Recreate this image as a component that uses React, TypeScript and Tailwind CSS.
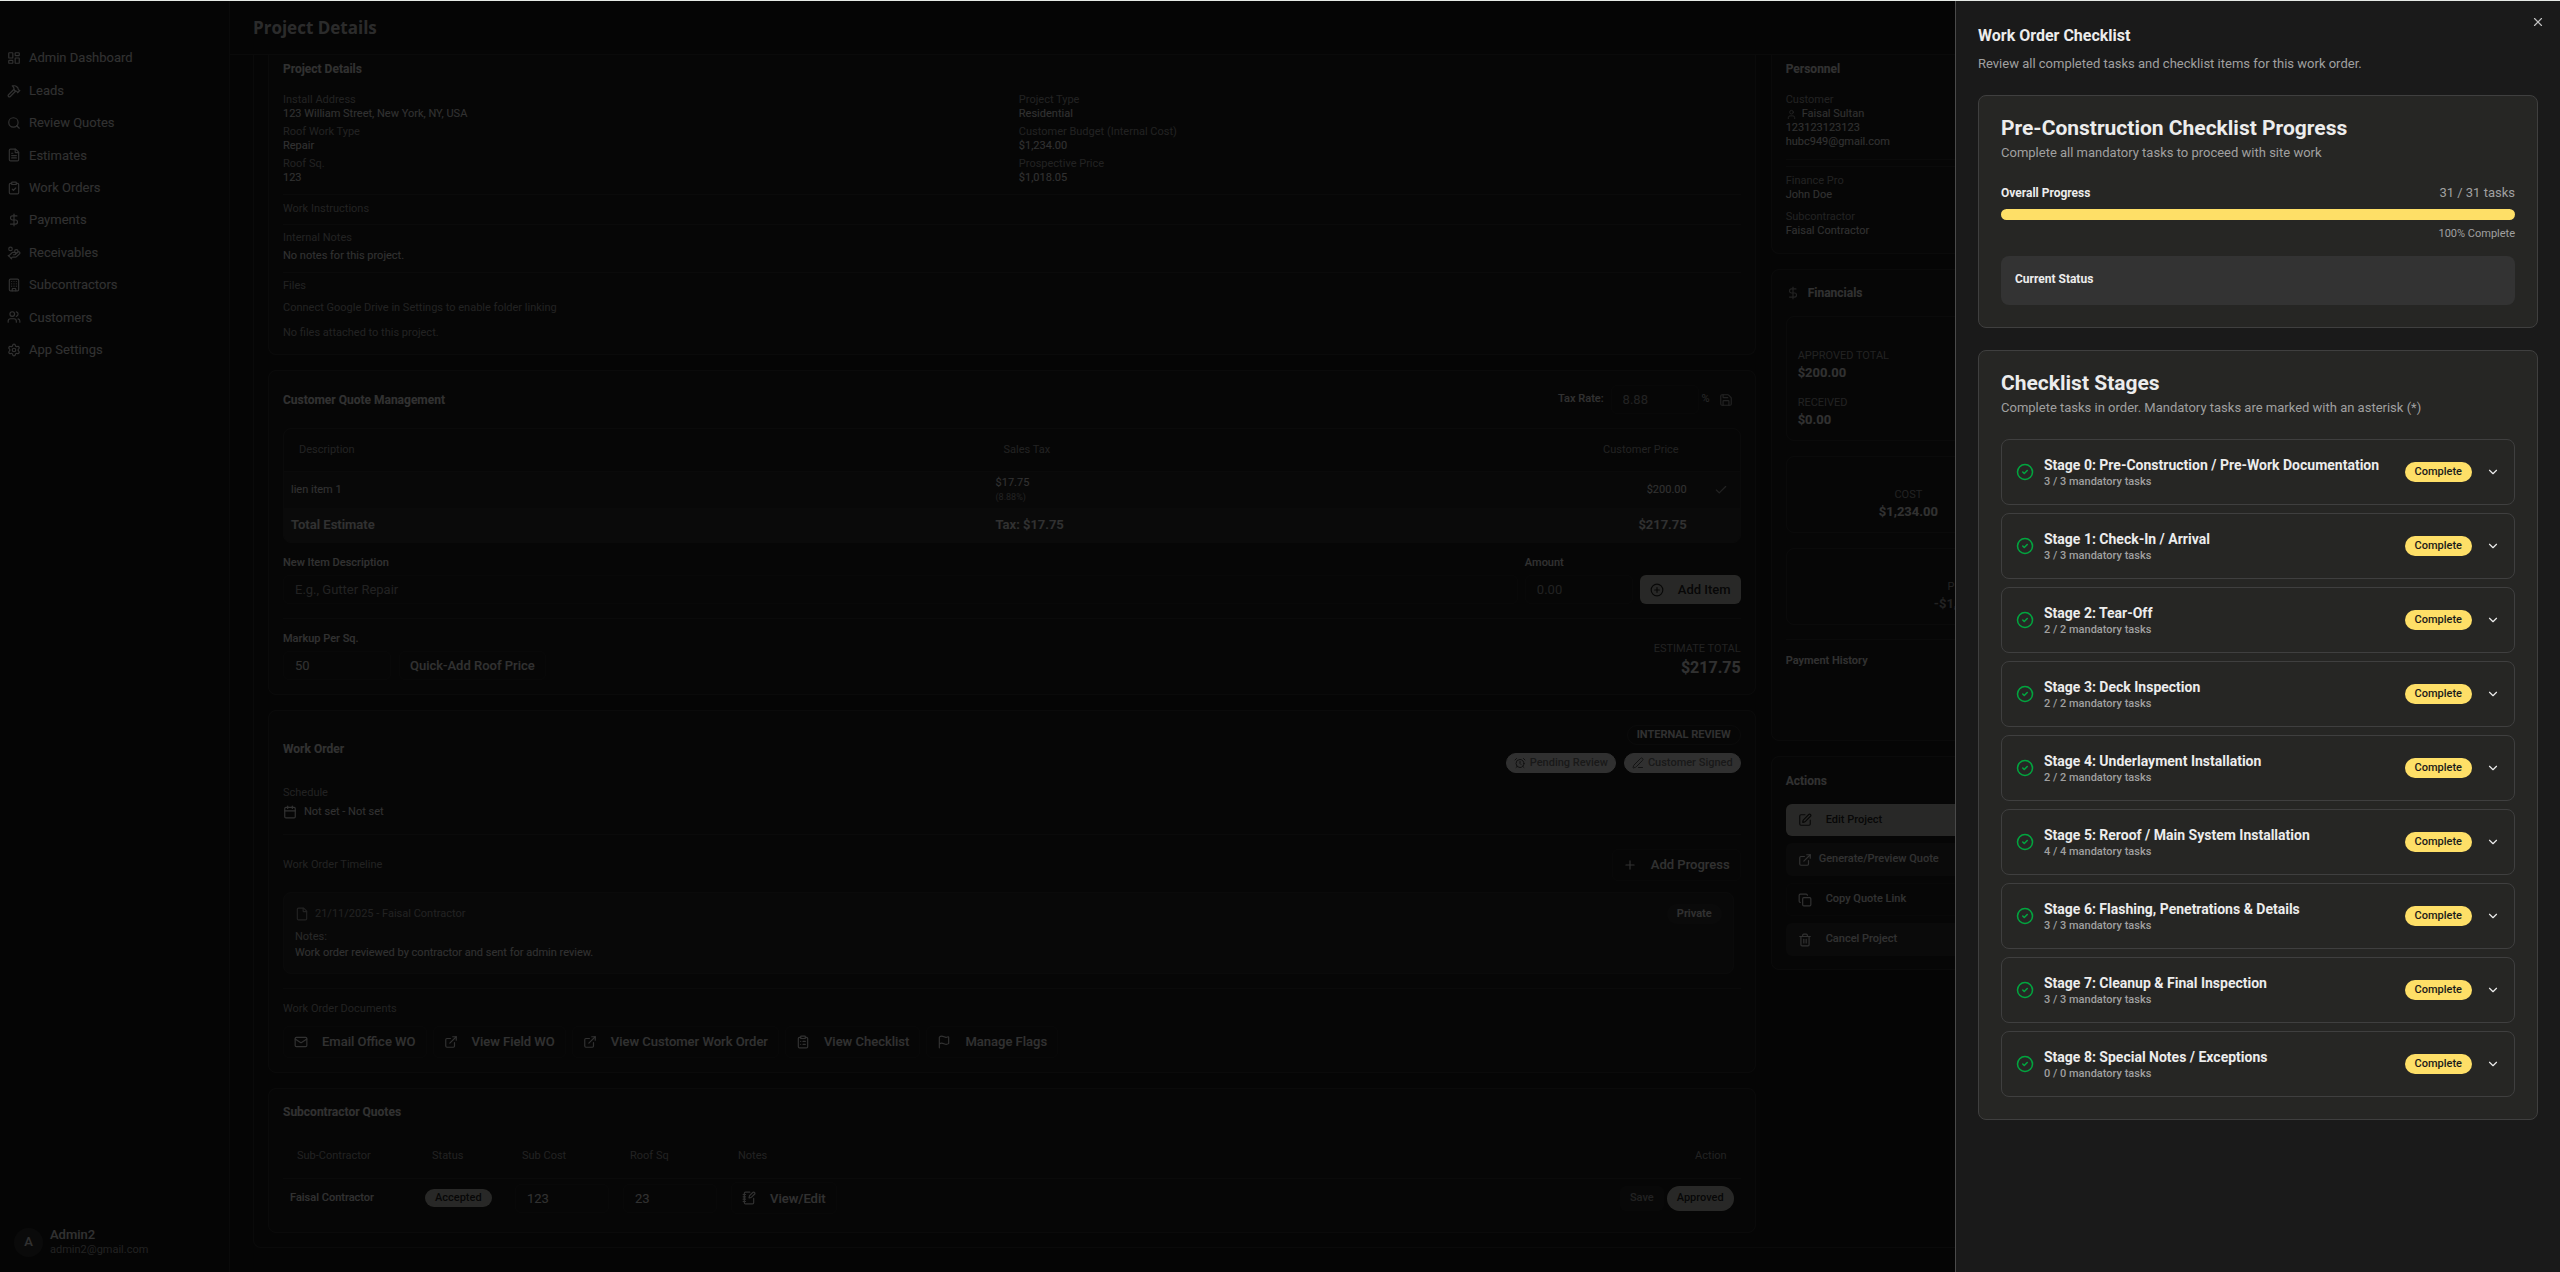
import { ReactNode } from "react";
import {
  AlarmClock,
  Building,
  Calendar,
  Check,
  ChevronDown,
  CircleCheck,
  CirclePlus,
  ClipboardCheck,
  ClipboardList,
  Copy,
  DollarSign,
  ExternalLink,
  File,
  FileText,
  Flag,
  Hammer,
  HandCoins,
  LayoutDashboard,
  LucideIcon,
  Mail,
  NotebookPen,
  PenLine,
  Plus,
  Save,
  Search,
  Settings,
  SquarePen,
  Trash2,
  User,
  Users,
  X,
} from "lucide-react";
import clsx from "clsx";

/* ================= DATA ================= */

const navItems: { label: string; icon: LucideIcon }[] = [
  { label: "Admin Dashboard", icon: LayoutDashboard },
  { label: "Leads", icon: Hammer },
  { label: "Review Quotes", icon: Search },
  { label: "Estimates", icon: FileText },
  { label: "Work Orders", icon: ClipboardCheck },
  { label: "Payments", icon: DollarSign },
  { label: "Receivables", icon: HandCoins },
  { label: "Subcontractors", icon: Building },
  { label: "Customers", icon: Users },
  { label: "App Settings", icon: Settings },
];

const projectFields = [
  { label: "Install Address", value: "123 William Street, New York, NY, USA" },
  { label: "Project Type", value: "Residential" },
  { label: "Roof Work Type", value: "Repair" },
  { label: "Customer Budget (Internal Cost)", value: "$1,234.00" },
  { label: "Roof Sq.", value: "123" },
  { label: "Prospective Price", value: "$1,018.05" },
];

const documents: { label: string; icon: LucideIcon }[] = [
  { label: "Email Office WO", icon: Mail },
  { label: "View Field WO", icon: ExternalLink },
  { label: "View Customer Work Order", icon: ExternalLink },
  { label: "View Checklist", icon: ClipboardList },
  { label: "Manage Flags", icon: Flag },
];

const stages = [
  { title: "Stage 0: Pre-Construction / Pre-Work Documentation", done: 3, total: 3 },
  { title: "Stage 1: Check-In / Arrival", done: 3, total: 3 },
  { title: "Stage 2: Tear-Off", done: 2, total: 2 },
  { title: "Stage 3: Deck Inspection", done: 2, total: 2 },
  { title: "Stage 4: Underlayment Installation", done: 2, total: 2 },
  { title: "Stage 5: Reroof / Main System Installation", done: 4, total: 4 },
  { title: "Stage 6: Flashing, Penetrations & Details", done: 3, total: 3 },
  { title: "Stage 7: Cleanup & Final Inspection", done: 3, total: 3 },
  { title: "Stage 8: Special Notes / Exceptions", done: 0, total: 0 },
];

/* ================= SHARED ================= */

function Card({ children, className }: { children: ReactNode; className?: string }) {
  return (
    <section
      className={clsx(
        "rounded-lg border border-[#363636] bg-[#1f1f1f] px-[14px]",
        className
      )}
    >
      {children}
    </section>
  );
}

function CardTitle({ children }: { children: ReactNode }) {
  return <h2 className="text-[12px] leading-[18px] font-bold">{children}</h2>;
}

function Label({ children }: { children: ReactNode }) {
  return <p className="text-[11px] leading-[14px] text-[#a8a8a8]">{children}</p>;
}

function Value({ children }: { children: ReactNode }) {
  return <p className="text-[11px] leading-[14px]">{children}</p>;
}

function OutlineButton({
  icon: Icon,
  children,
}: {
  icon?: LucideIcon;
  children: ReactNode;
}) {
  return (
    <button className="flex h-8 items-center gap-[14px] rounded-md border border-[#2c2c2c] px-[10px] text-[13px] font-medium">
      {Icon && <Icon className="size-[14px]" />}
      {children}
    </button>
  );
}

const inputClass =
  "h-[29px] rounded-md border border-[#2c2c2c] bg-transparent px-[11px] text-[13px] placeholder:text-[#a8a8a8]";

/* ================= SIDEBAR ================= */

function Sidebar() {
  return (
    <aside className="flex w-[230px] shrink-0 flex-col border-r border-[#363636] pt-[41px]">
      <nav className="grid h-[324px] auto-rows-fr">
        {navItems.map(({ label, icon: Icon }) => (
          <a key={label} href="#" className="flex items-center gap-2 px-[7px] text-[13px]">
            <Icon className="size-[14px]" />
            {label}
          </a>
        ))}
      </nav>

      <div className="mt-auto flex items-center gap-[7px] px-[14px] pb-[15px]">
        <div className="flex size-[29px] items-center justify-center rounded-full bg-[#333333] text-[13px] font-medium">
          A
        </div>
        <div>
          <p className="text-[13px] leading-4 font-medium">Admin2</p>
          <p className="text-[11px] leading-[14px] text-[#a8a8a8]">admin2@gmail.com</p>
        </div>
      </div>
    </aside>
  );
}

/* ================= LEFT COLUMN ================= */

function ProjectDetailsCard() {
  return (
    <Card className="rounded-t-none border-t-0 pt-[5px] pb-[14px]">
      <CardTitle>Project Details</CardTitle>
      <div className="mt-[15px] grid grid-cols-2 gap-x-[14px] gap-y-1">
        {projectFields.map((field) => (
          <div key={field.label}>
            <Label>{field.label}</Label>
            <Value>{field.value}</Value>
          </div>
        ))}
      </div>
      <div className="mt-[9px] border-t border-[#363636] pt-[7px]">
        <Label>Work Instructions</Label>
      </div>
      <div className="mt-[8px] border-t border-[#363636] pt-[6px]">
        <Label>Internal Notes</Label>
        <div className="mt-1">
          <Value>No notes for this project.</Value>
        </div>
      </div>
      <div className="mt-[9px] border-t border-[#363636] pt-[6px]">
        <Label>Files</Label>
        <div className="mt-2 flex flex-col gap-[11px]">
          <Label>Connect Google Drive in Settings to enable folder linking</Label>
          <Label>No files attached to this project.</Label>
        </div>
      </div>
    </Card>
  );
}

function QuoteCard() {
  return (
    <Card className="py-[14px]">
      <div className="flex h-[29px] items-center justify-between">
        <CardTitle>Customer Quote Management</CardTitle>
        <div className="flex items-center gap-[7px] text-[11px]">
          <label htmlFor="tax-rate" className="font-medium">
            Tax Rate:
          </label>
          <input
            id="tax-rate"
            defaultValue="8.88"
            className={clsx(inputClass, "w-[88px] text-[#a8a8a8]")}
          />
          <span className="-ml-1 text-[#c8c8c8]">%</span>
          <button aria-label="Save tax rate" className="pr-2 pl-[2px]">
            <Save className="size-[14px] text-[#a8a8a8]" />
          </button>
        </div>
      </div>

      <div className="mt-[14px] overflow-hidden rounded-lg border border-[#363636]">
        <table className="w-full table-fixed text-[11px] leading-[14px]">
          <thead>
            <tr className="h-[42px] text-left text-[#a8a8a8]">
              <th className="w-[48.4%] px-[15px] font-normal">Description</th>
              <th className="px-[15px] font-normal">Sales Tax</th>
              <th className="px-[15px] text-right font-normal">Customer Price</th>
              <th className="w-[46px]" aria-label="Actions" />
            </tr>
          </thead>
          <tbody>
            <tr className="h-[37px] border-t border-[#363636] bg-[#2a2a2a]">
              <td className="px-[7px]">lien item 1</td>
              <td className="px-[7px]">
                <p>$17.75</p>
                <p className="text-[9px] text-[#a8a8a8]">(8.88%)</p>
              </td>
              <td className="px-[7px] text-right">$200.00</td>
              <td className="pl-5">
                <Check className="size-[14px] text-[#a8a8a8]" />
              </td>
            </tr>
            <tr className="h-[34px] bg-[#353535] text-[13px] font-semibold">
              <td className="px-[7px]">Total Estimate</td>
              <td className="px-[7px]">Tax: $17.75</td>
              <td className="px-[7px] text-right">$217.75</td>
              <td />
            </tr>
          </tbody>
        </table>
      </div>

      <div className="mt-[13px] flex items-end gap-[7px]">
        <div className="flex grow flex-col gap-[5px]">
          <label htmlFor="new-item" className="text-[11px] leading-[14px] font-medium">
            New Item Description
          </label>
          <input id="new-item" placeholder="E.g., Gutter Repair" className={inputClass} />
        </div>
        <div className="flex w-[108px] flex-col gap-[5px]">
          <label htmlFor="amount" className="text-[11px] leading-[14px] font-medium">
            Amount
          </label>
          <input id="amount" placeholder="0.00" className={inputClass} />
        </div>
        <button className="flex h-[29px] items-center gap-[14px] rounded-md bg-[#c8c8c0] px-[10px] text-[13px] font-medium text-[#262624]">
          <CirclePlus className="size-[14px]" />
          Add Item
        </button>
      </div>

      <div className="mt-[14px] flex items-end justify-between border-t border-[#363636] pt-[13px]">
        <div className="flex items-end gap-2">
          <div className="flex w-[108px] flex-col gap-[5px]">
            <label htmlFor="markup" className="text-[11px] leading-[14px] font-medium">
              Markup Per Sq.
            </label>
            <input id="markup" defaultValue="50" className={inputClass} />
          </div>
          <button className="h-[29px] rounded-md border border-[#2c2c2c] px-[10px] text-[13px] font-medium">
            Quick-Add Roof Price
          </button>
        </div>
        <div className="text-right">
          <Label>ESTIMATE TOTAL</Label>
          <p className="text-[16px] leading-6 font-bold">$217.75</p>
        </div>
      </div>
    </Card>
  );
}

function WorkOrderCard() {
  return (
    <Card className="py-[14px]">
      <div className="flex items-center justify-between">
        <CardTitle>Work Order</CardTitle>
        <div className="flex flex-col items-end gap-2 text-[11px] leading-[18px]">
          <span className="rounded-full border border-[#363636] px-[9px] font-semibold">
            INTERNAL REVIEW
          </span>
          <div className="flex gap-2 text-[#7c7c7c]">
            <span className="flex items-center gap-1 rounded-full border border-[#f0f0f0] bg-[#f0f0f0] px-[7px] font-medium">
              <AlarmClock className="size-3 text-[#505050]" />
              Pending Review
            </span>
            <span className="flex items-center gap-1 rounded-full border border-[#f0f0f0] bg-[#f0f0f0] px-[7px] font-medium">
              <PenLine className="size-3 text-[#606060]" />
              Customer Signed
            </span>
          </div>
        </div>
      </div>

      <div className="mt-[13px]">
        <Label>Schedule</Label>
        <p className="mt-[3px] flex items-center gap-[7px] text-[11px] leading-[18px]">
          <Calendar className="size-[14px]" />
          Not set - Not set
        </p>
      </div>

      <div className="mt-[13px] flex items-center justify-between border-t border-[#363636] pt-[14px]">
        <Label>Work Order Timeline</Label>
        <OutlineButton icon={Plus}>Add Progress</OutlineButton>
      </div>

      <div className="mt-[11px] mr-[7px] rounded-lg border border-[#363636] bg-[#2a2a2a] px-[11px] pt-[11px] pb-[13px] text-[11px]">
        <div className="flex items-center justify-between">
          <p className="flex items-center gap-[6px] text-[#a8a8a8]">
            <File className="size-[14px]" />
            21/11/2025 - Faisal Contractor
          </p>
          <span className="rounded-full bg-[#333333] px-[10px] leading-5 font-semibold">
            Private
          </span>
        </div>
        <p className="mt-[6px] leading-[14px] text-[#c8c8c8]">Notes:</p>
        <p className="mt-[2px] leading-[14px]">
          Work order reviewed by contractor and sent for admin review.
        </p>
      </div>

      <div className="mt-[14px] border-t border-[#363636] pt-[13px]">
        <Label>Work Order Documents</Label>
        <div className="mt-[10px] flex flex-wrap gap-1.5">
          {documents.map((doc) => (
            <OutlineButton key={doc.label} icon={doc.icon}>
              {doc.label}
            </OutlineButton>
          ))}
        </div>
      </div>
    </Card>
  );
}

function SubcontractorCard() {
  return (
    <Card className="py-[14px]">
      <CardTitle>Subcontractor Quotes</CardTitle>
      <table className="mt-[14px] w-full table-fixed text-[11px]">
        <thead>
          <tr className="h-[43px] text-left text-[#a8a8a8]">
            <th className="w-[135px] px-[14px] font-normal">Sub-Contractor</th>
            <th className="w-[90px] px-[14px] font-normal">Status</th>
            <th className="w-[108px] px-[14px] font-normal">Sub Cost</th>
            <th className="w-[108px] px-[14px] font-normal">Roof Sq</th>
            <th className="px-[14px] font-normal">Notes</th>
            <th className="px-[14px] text-right font-normal">Action</th>
          </tr>
        </thead>
        <tbody>
          <tr className="h-10 border-t border-[#363636]">
            <td className="px-[7px] font-medium">Faisal Contractor</td>
            <td className="px-[7px]">
              <span className="inline-block rounded-full bg-[#c8c8c0] px-[10px] leading-[18px] font-medium text-[#262624]">
                Accepted
              </span>
            </td>
            <td className="px-[7px]">
              <input aria-label="Sub Cost" defaultValue="123" className={clsx(inputClass, "w-full")} />
            </td>
            <td className="px-[7px]">
              <input aria-label="Roof Sq" defaultValue="23" className={clsx(inputClass, "w-full")} />
            </td>
            <td className="px-[7px]">
              <OutlineButton icon={NotebookPen}>View/Edit</OutlineButton>
            </td>
            <td className="px-[7px]">
              <div className="flex justify-end gap-[3px] font-medium">
                <button className="h-[25px] rounded-md bg-[#2a2a2a] px-[10px] text-[#a8a8a8]">
                  Save
                </button>
                <button className="h-[25px] rounded-full bg-[#c8c8c0] px-[10px] text-[#262624]">
                  Approved
                </button>
              </div>
            </td>
          </tr>
        </tbody>
      </table>
    </Card>
  );
}

/* ================= RIGHT COLUMN ================= */

function PersonnelCard() {
  return (
    <Card className="rounded-t-none border-t-0 pt-[5px] pb-[15px]">
      <CardTitle>Personnel</CardTitle>
      <div className="mt-[15px]">
        <Label>Customer</Label>
        <p className="flex items-center gap-[5px] text-[11px] leading-[14px]">
          <User className="size-[11px] text-[#a8a8a8]" />
          Faisal Sultan
        </p>
        <Value>123123123123</Value>
        <Value>hubc949@gmail.com</Value>
      </div>
      <div className="mt-[10px] h-2 border-y border-[#363636]" />
      <div className="mt-[7px]">
        <Label>Finance Pro</Label>
        <Value>John Doe</Value>
      </div>
      <div className="mt-2">
        <Label>Subcontractor</Label>
        <Value>Faisal Contractor</Value>
      </div>
    </Card>
  );
}

function Figure({ label, value, className }: { label: string; value: string; className?: string }) {
  return (
    <div className={className}>
      <Label>{label}</Label>
      <p className="text-[13px] leading-5 font-bold">{value}</p>
    </div>
  );
}

function FinancialsCard() {
  return (
    <Card className="h-[472px] pt-[14px]">
      <div className="flex items-center gap-2">
        <DollarSign className="size-[14px] text-[#a8a8a8]" />
        <CardTitle>Financials</CardTitle>
      </div>
      <div className="mt-[14px] flex flex-col gap-[15px]">
        <div className="flex h-[125px] flex-col justify-end gap-[13px] rounded-lg border border-[#363636] px-[11px] pb-[10px]">
          <Figure label="APPROVED TOTAL" value="$200.00" />
          <Figure label="RECEIVED" value="$0.00" />
        </div>
        <div className="grid h-[77px] grid-cols-3 items-end gap-[15px] rounded-lg border border-[#363636] px-[14px] pb-[10px] text-center">
          <Figure label="COST" value="$1,234.00" />
        </div>
        <div className="grid h-[77px] grid-cols-2 items-end gap-[15px] rounded-lg border border-[#363636] px-[14px] pb-[10px] text-center">
          <Figure label="PROFIT" value="-$1,034.00" className="text-[#a8a8a8]" />
        </div>
      </div>
      <div className="mt-[14px] border-t border-[#363636] pt-[13px]">
        <h3 className="text-[11px] leading-4 font-semibold">Payment History</h3>
      </div>
    </Card>
  );
}

function ActionsCard() {
  return (
    <Card className="pt-[15px] pb-[13px]">
      <CardTitle>Actions</CardTitle>
      <div className="mt-[14px] flex flex-col gap-[7px] text-[11px] font-medium">
        <button className="flex h-8 items-center gap-[14px] rounded-md bg-[#c8c8c0] px-3 text-[#262624]">
          <SquarePen className="size-[14px]" />
          Edit Project
        </button>
        <button className="flex h-[33px] items-center gap-[7px] rounded-md bg-[#333333] px-3">
          <ExternalLink className="size-[14px]" />
          Generate/Preview Quote
        </button>
        <button className="flex h-[33px] items-center gap-[14px] rounded-md border border-[#2a2a2a] px-[11px]">
          <Copy className="size-[14px]" />
          Copy Quote Link
        </button>
        <button className="flex h-[33px] items-center gap-[14px] rounded-md bg-[#333333] px-3">
          <Trash2 className="size-[14px]" />
          Cancel Project
        </button>
      </div>
    </Card>
  );
}

/* ================= CHECKLIST SHEET ================= */

function SheetCard({
  title,
  description,
  children,
}: {
  title: string;
  description: string;
  children: ReactNode;
}) {
  return (
    <section className="rounded-lg border border-[#3f3f3f] bg-[#262624] p-[22px]">
      <h3 className="text-[21px] leading-[21px] font-bold">{title}</h3>
      <p className="mt-[5px] text-[13px] leading-[18px] text-[#a0a0a0]">{description}</p>
      <div className="mt-[22px]">{children}</div>
    </section>
  );
}

function StageRow({ title, done, total }: { title: string; done: number; total: number }) {
  return (
    <button className="flex w-full items-center rounded-lg border border-[#3f3f3f] px-[14px] py-[15px] text-left">
      <CircleCheck className="size-[18px] shrink-0 text-green-600" />
      <span className="ml-[10px] flex grow flex-col">
        <span className="text-[14px] leading-5 font-bold">{title}</span>
        <span className="text-[11px] leading-[14px] font-medium text-[#a0a0a0]">
          {done} / {total} mandatory tasks
        </span>
      </span>
      <span className="rounded-full bg-[#fedf67] px-[10px] text-[11px] leading-5 font-medium text-[#1a1a1a]">
        Complete
      </span>
      <ChevronDown className="ml-[14px] size-[14px] shrink-0" />
    </button>
  );
}

function ChecklistSheet() {
  return (
    <div
      role="dialog"
      aria-labelledby="sheet-title"
      className="fixed top-px right-0 bottom-0 w-[605px] border-l border-[#4a4a4a] bg-[#1a1a1a] p-[22px] text-[#ececec]"
    >
      <h2 id="sheet-title" className="text-[16px] leading-[25px] font-bold">
        Work Order Checklist
      </h2>
      <p className="mt-[7px] text-[13px] leading-[18px] text-[#a0a0a0]">
        Review all completed tasks and checklist items for this work order.
      </p>

      <div className="mt-[22px] flex flex-col gap-[22px]">
        <SheetCard
          title="Pre-Construction Checklist Progress"
          description="Complete all mandatory tasks to proceed with site work"
        >
          <div className="flex justify-between text-[13px] leading-[18px]">
            <span className="text-[12px] font-bold">Overall Progress</span>
            <span className="text-[#a0a0a0]">31 / 31 tasks</span>
          </div>
          <div
            role="progressbar"
            aria-label="Overall Progress"
            aria-valuenow={100}
            className="mt-[7px] h-[11px] overflow-hidden rounded-full bg-[#333333]"
          >
            <div className="h-full w-full bg-[#fedf67]" />
          </div>
          <p className="mt-[7px] text-right text-[11px] leading-[14px] text-[#a0a0a0]">
            100% Complete
          </p>
          <div className="mt-[15px] rounded-lg bg-[#333333] px-[14px] pt-[14px] pb-[17px]">
            <h4 className="text-[12px] leading-[18px] font-bold">Current Status</h4>
          </div>
        </SheetCard>

        <SheetCard
          title="Checklist Stages"
          description="Complete tasks in order. Mandatory tasks are marked with an asterisk (*)"
        >
          <div className="flex flex-col gap-2">
            {stages.map((stage) => (
              <StageRow key={stage.title} {...stage} />
            ))}
          </div>
        </SheetCard>
      </div>

      <button aria-label="Close" className="absolute top-[14px] right-[15px] text-[#c0c0c0]">
        <X className="size-[14px]" />
      </button>
    </div>
  );
}

/* ================= PAGE ================= */

export default function App() {
  return (
    <div className="flex h-screen overflow-hidden border-t border-[#e6eae6] bg-[#1a1a1a] font-[Roboto,sans-serif] text-[#f5f5f5]">
      <Sidebar />

      <div className="flex grow flex-col">
        <header className="flex h-[54px] shrink-0 items-center border-b border-[#363636] px-[23px]">
          <h1 className="font-['Open_Sans',sans-serif] text-[17px] font-bold text-[#d8d8d8]">
            Project Details
          </h1>
        </header>

        <main className="overflow-hidden pr-[38px] pl-[23px]">
          <div className="grid grid-cols-3 items-start gap-[15px] rounded-b-lg border border-t-0 border-[#363636] px-[14px] pb-[14px]">
            <div className="col-span-2 flex flex-col gap-[15px]">
              <ProjectDetailsCard />
              <QuoteCard />
              <WorkOrderCard />
              <SubcontractorCard />
            </div>
            <div className="flex flex-col gap-[15px]">
              <PersonnelCard />
              <FinancialsCard />
              <ActionsCard />
            </div>
          </div>
        </main>
      </div>

      {/* Backdrop */}
      <div className="fixed inset-0 top-px bg-black/80" />

      <ChecklistSheet />
    </div>
  );
}
